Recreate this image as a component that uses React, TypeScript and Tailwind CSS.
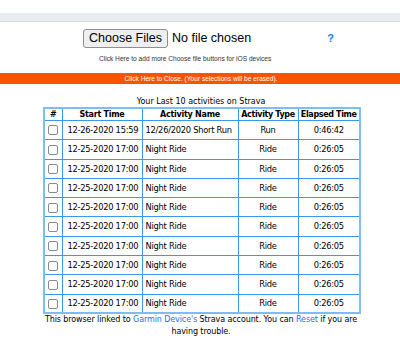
import React from 'react';

interface Activity {
  start: string;
  name: string;
  type: string;
  elapsed: string;
}

const activities: Activity[] = [
  { start: '12-26-2020 15:59', name: '12/26/2020 Short Run', type: 'Run', elapsed: '0:46:42' },
  ...Array.from({ length: 9 }, () => ({
    start: '12-25-2020 17:00',
    name: 'Night Ride',
    type: 'Ride',
    elapsed: '0:26:05',
  })),
];

const tableFont = { fontFamily: '"DejaVu Sans", Verdana, sans-serif' };

const App: React.FC = () => {
  return (
    <div className="w-[400px] h-[362px] bg-white overflow-hidden font-['Liberation_Sans',Arial,sans-serif] text-black">
      {/* Top band */}
      <div className="h-[13px]" />
      <div className="h-[9px] bg-[#e9ecee] border-b border-[#d9dcde]" />

      {/* File picker */}
      <div className="flex items-center h-[19px] mt-[7px] pl-[83px]">
        <button className="h-[19px] px-[5px] text-[12.5px] leading-none bg-[#efefef] border border-[#8f8f8f] rounded-[3px] text-black">
          Choose Files
        </button>
        <span className="ml-[4px] text-[12.5px] leading-none">No file chosen</span>
        <span className="ml-auto mr-[66px] text-[#1a7ee8] font-bold text-[11px] leading-none">?</span>
      </div>
      <div className="mt-[6px] pl-[99px] text-[6.6px] leading-[9px] text-[#333]">
        Click Here to add more Choose file buttons for iOS devices
      </div>

      {/* Close bar */}
      <div className="mt-[10px] h-[11px] bg-[#fd5300] text-white text-[6.6px] leading-[11px] text-center pl-[2px]">
        Click Here to Close. (Your selections will be erased).
      </div>

      {/* Activities */}
      <div style={tableFont} className="mt-[12px] text-center text-[8px] leading-[11px] pl-[2px]">
        Your Last 10 activities on Strava
      </div>
      <div className="pl-[43px]">
        <table style={tableFont} className="w-[316px] table-fixed border-collapse border-2 border-[#7cbdf6] text-[8.3px] tracking-[-0.25px]">
          <colgroup>
            <col className="w-[18px]" />
            <col className="w-[80px]" />
            <col className="w-[96px]" />
            <col className="w-[60px]" />
            <col className="w-[62px]" />
          </colgroup>
          <thead>
            <tr className="h-[12px] text-[8px]">
              <th className="border border-[#3a98ee] font-bold leading-[11px]">#</th>
              <th className="border border-[#3a98ee] font-bold leading-[11px]">Start Time</th>
              <th className="border border-[#3a98ee] font-bold leading-[11px]">Activity Name</th>
              <th className="border border-[#3a98ee] font-bold leading-[11px] whitespace-nowrap overflow-hidden tracking-[-0.35px]">Activity Type</th>
              <th className="border border-[#3a98ee] font-bold leading-[11px] whitespace-nowrap overflow-hidden tracking-[-0.35px]">Elapsed Time</th>
            </tr>
          </thead>
          <tbody>
            {activities.map((a, i) => (
              <tr key={i} className="h-[19.3px]">
                <td className="border border-[#3a98ee] text-center">
                  <span className="inline-block align-middle w-[10px] h-[10px] border border-[#8a8a8a] rounded-[2px] bg-white" />
                </td>
                <td className="border border-[#3a98ee] pl-[5px] whitespace-nowrap">{a.start}</td>
                <td className="border border-[#3a98ee] pl-[3px] whitespace-nowrap">{a.name}</td>
                <td className="border border-[#3a98ee] text-center">{a.type}</td>
                <td className="border border-[#3a98ee] text-center">{a.elapsed}</td>
              </tr>
            ))}
          </tbody>
        </table>
      </div>
      <div style={tableFont} className="w-[324px] ml-[39px] text-center text-[8px] tracking-[-0.1px] leading-[12px]">
        <div>
          <span>This browser linked to </span>
          <a className="text-[#1a73e8]">Garmin Device's</a>
          <span> Strava account. You can </span>
          <a className="text-[#1a73e8]">Reset</a>
          <span> if you are</span>
        </div>
        <div>having trouble.</div>
      </div>
    </div>
  );
};

export default App;
